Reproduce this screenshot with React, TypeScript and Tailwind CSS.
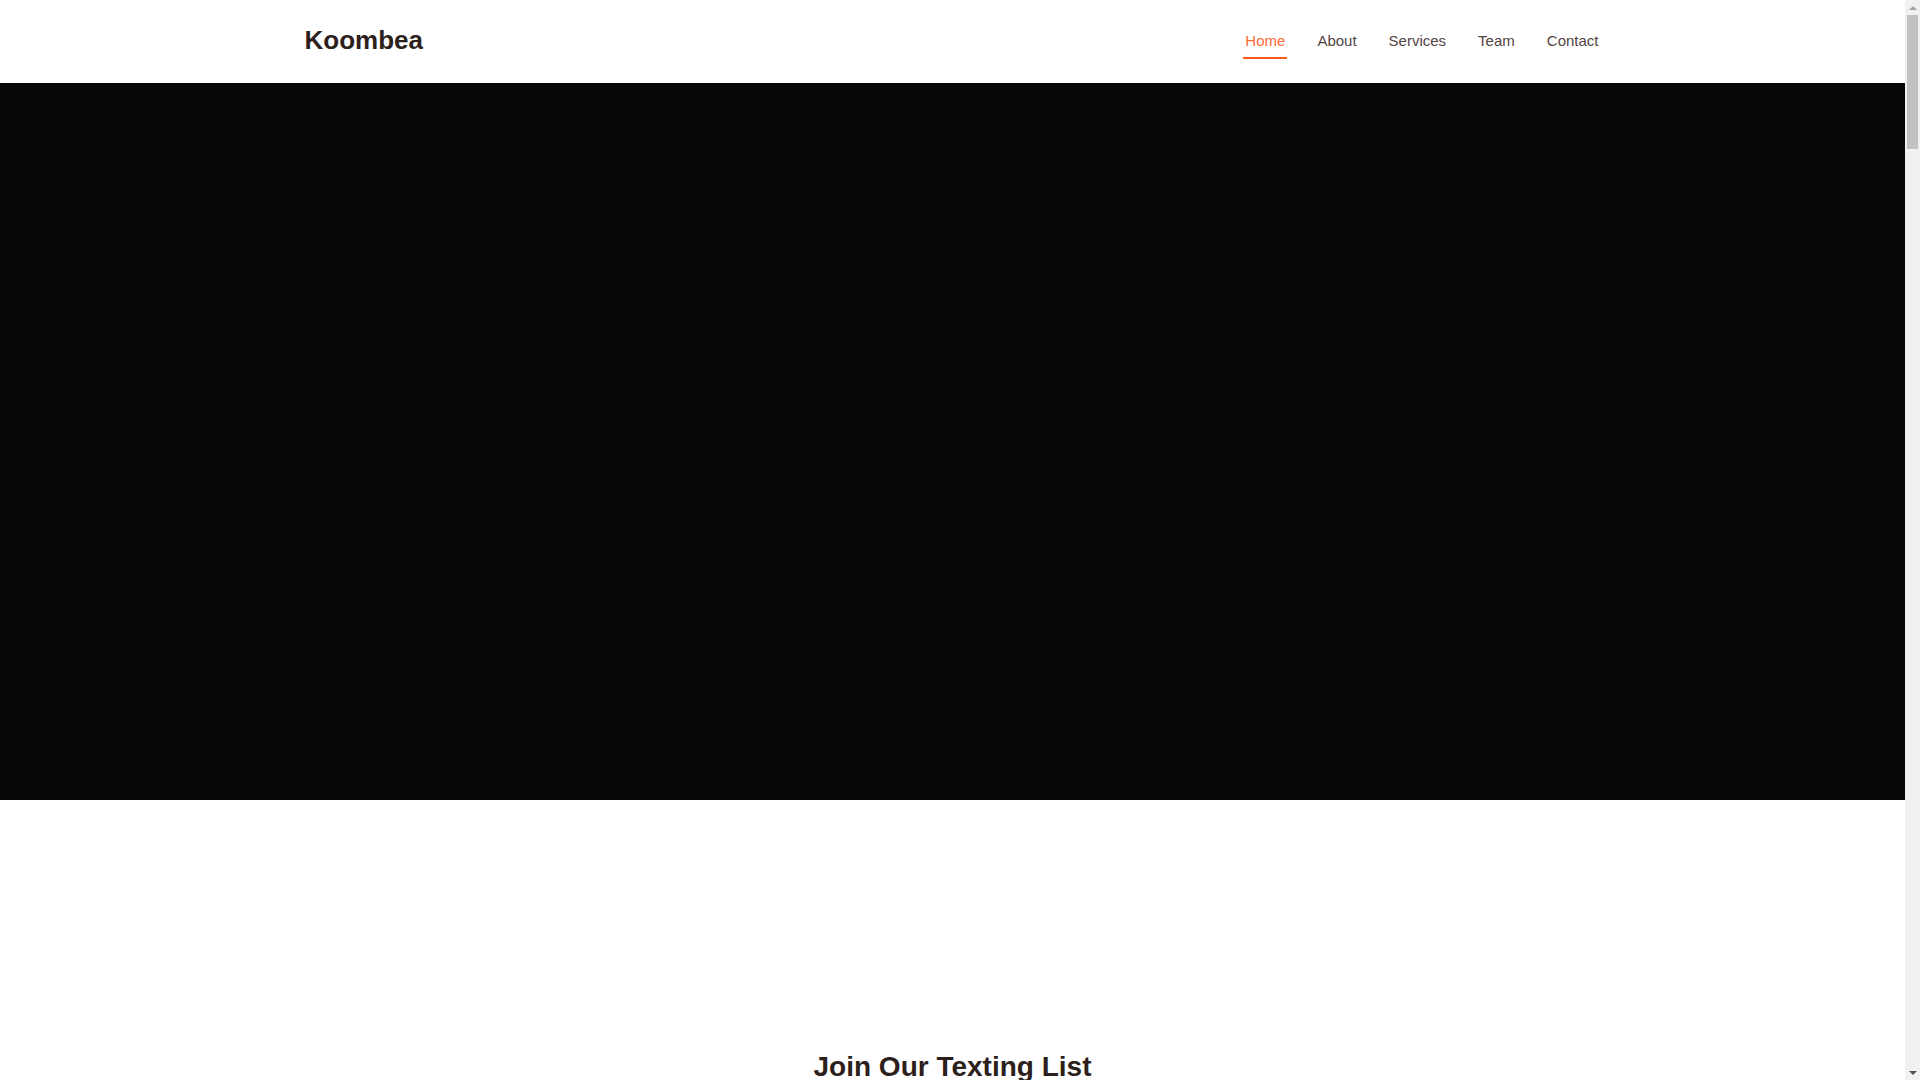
const links = ["Home", "About", "Services", "Team", "Contact"];

function Navbar() {
  return (
    <header className="h-[83px] bg-white">
      <div className="mx-auto flex h-full max-w-[1320px] items-center justify-between px-3">
        <a href="#" className="mb-[3px] text-[26px] leading-[30px] font-bold text-[#2d1f1b]">
          Koombea
        </a>
        <nav className="flex items-center gap-[28px]">
          {links.map((label, idx) => (
            <a
              key={label}
              href="#"
              className={
                idx === 0
                  ? "border-b-2 border-[#ff5a1f] px-[2px] pt-[6px] pb-[4px] text-[15px] leading-[22.5px] text-[#ff6a35]"
                  : "border-b-2 border-transparent px-[2px] pt-[6px] pb-[4px] text-[15px] leading-[22.5px] text-[#54443f]"
              }
            >
              {label}
            </a>
          ))}
        </nav>
      </div>
    </header>
  );
}

function TextingList() {
  return (
    <section className="min-h-[900px] bg-white pt-[250px]">
      <div className="mx-auto max-w-[1320px] px-3 text-center">
        <h2 className="text-[28px] leading-[34px] font-bold text-[#2d1f1b]">
          Join Our Texting List
        </h2>
        <p className="mt-4 text-[16px] text-[#4f3f3b]">
          Get updates and offers straight to your phone.
        </p>
        <form className="mx-auto mt-8 flex max-w-[480px] gap-3">
          <input
            type="tel"
            placeholder="Phone number"
            className="flex-1 rounded border border-gray-300 px-4 py-2 text-[15px]"
          />
          <button
            type="button"
            className="rounded bg-[#ff5a1f] px-6 py-2 text-[15px] font-medium text-white"
          >
            Subscribe
          </button>
        </form>
      </div>
    </section>
  );
}

// classic browser scrollbar, page is ~8460px tall
function Scrollbar() {
  return (
    <aside className="sticky top-0 flex h-screen w-[15px] shrink-0 flex-col bg-[#f1f1f1]">
      <div className="flex h-[15px] items-center justify-center">
        <span className="h-0 w-0 border-x-[4px] border-b-[4px] border-x-transparent border-b-[#a3a3a3]" />
      </div>
      <div className="flex-1 px-[2px]">
        <div className="h-[134px] bg-[#c1c1c1]" />
      </div>
      <div className="flex h-[15px] items-center justify-center">
        <span className="h-0 w-0 border-x-[4px] border-t-[4px] border-x-transparent border-t-[#505050]" />
      </div>
    </aside>
  );
}

export default function App() {
  return (
    <div className="flex bg-white font-['Liberation_Sans',Arial,sans-serif]">
      <main className="min-w-0 flex-1">
        <Navbar />
        <section className="h-[717px] bg-[#070707]" />
        <TextingList />
        {/* remaining page sections below the fold */}
        <section id="about" className="min-h-[1600px] bg-white" />
        <section id="services" className="min-h-[1800px] bg-white" />
        <section id="team" className="min-h-[1800px] bg-white" />
        <section id="contact" className="min-h-[1560px] bg-white" />
      </main>
      <Scrollbar />
    </div>
  );
}
